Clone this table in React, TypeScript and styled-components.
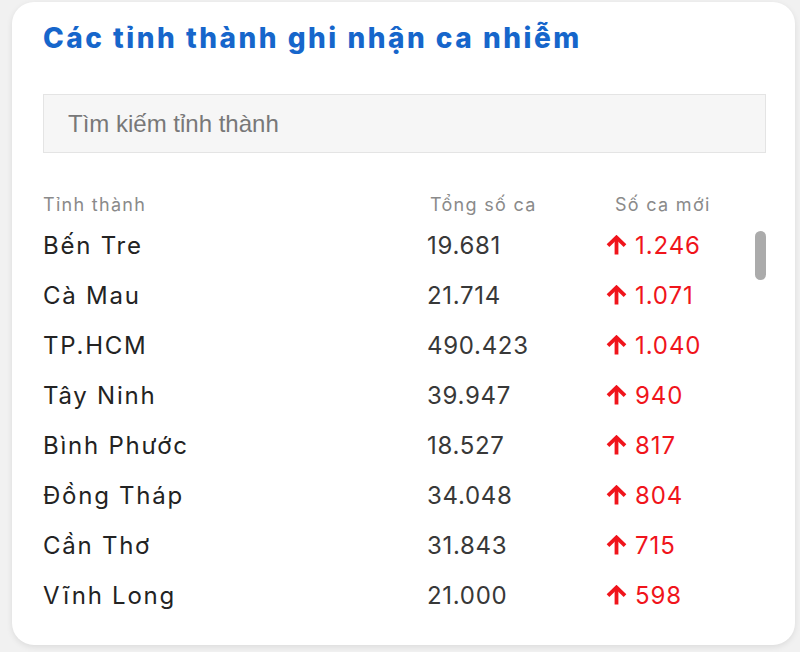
import React from 'react';
import styled, { createGlobalStyle } from 'styled-components';

interface Province {
  name: string;
  total: string;
  today: string;
}

const provinces: Province[] = [
  { name: 'Bến Tre', total: '19.681', today: '1.246' },
  { name: 'Cà Mau', total: '21.714', today: '1.071' },
  { name: 'TP.HCM', total: '490.423', today: '1.040' },
  { name: 'Tây Ninh', total: '39.947', today: '940' },
  { name: 'Bình Phước', total: '18.527', today: '817' },
  { name: 'Đồng Tháp', total: '34.048', today: '804' },
  { name: 'Cần Thơ', total: '31.843', today: '715' },
  { name: 'Vĩnh Long', total: '21.000', today: '598' },
];

const ArrowUp = () => (
  <svg width="21" height="20" viewBox="0 0 21 20" fill="none">
    <path d="M10.5 19.5V3" stroke="#f0141b" strokeWidth="3.8" />
    <path d="M2 10.6L10.5 2.4 19 10.6" stroke="#f0141b" strokeWidth="3.8" />
  </svg>
);

const App = () => (
  <>
    <GlobalStyle />
    <Page>
      <Card>
        <Title>Các tỉnh thành ghi nhận ca nhiễm</Title>
        <Search placeholder="Tìm kiếm tỉnh thành" />
        <HeadRow>
          <HeadCell>Tỉnh thành</HeadCell>
          <HeadCell shift={3}>Tổng số ca</HeadCell>
          <HeadCell shift={9}>Số ca mới</HeadCell>
        </HeadRow>
        <Body>
          <Rows>
            {provinces.map((p) => (
              <Row key={p.name}>
                <Name>{p.name}</Name>
                <Total>{p.total}</Total>
                <New>
                  <ArrowUp />
                  {p.today}
                </New>
              </Row>
            ))}
          </Rows>
          <Track>
            <Thumb />
          </Track>
        </Body>
      </Card>
    </Page>
  </>
);

export default App;

const GlobalStyle = createGlobalStyle`
  body {
    margin: 0;
    background: #f1f1f1;
    font-family: Inter, "Noto Sans", sans-serif;
  }
`;

const Page = styled.div`
  height: 652px;
  padding: 2px 5px 0 12px;
  box-sizing: border-box;
`;

const Card = styled.div`
  width: 783px;
  height: 643px;
  box-sizing: border-box;
  background: #fff;
  border-radius: 22px;
  box-shadow: 0 2px 6px rgba(0, 0, 0, 0.09);
  padding: 16px 29px 0 31px;
  display: flex;
  flex-direction: column;
`;

const Title = styled.h1`
  margin: 0;
  font-size: 28px;
  line-height: 40px;
  font-weight: 800;
  color: #1666cb;
  letter-spacing: 2.5px;
  white-space: nowrap;
`;

const Search = styled.input`
  margin-top: 36px;
  height: 59px;
  box-sizing: border-box;
  border: 1px solid #e4e4e4;
  background: #f6f6f6;
  padding: 0 24px;
  font-family: "Liberation Sans", Arial, sans-serif;
  font-size: 24px;
  outline: none;
  &::placeholder {
    color: #787878;
  }
`;

const Columns = styled.div`
  display: grid;
  grid-template-columns: 384px 179px 1fr;
  align-items: center;
`;

const HeadRow = styled(Columns)`
  height: 32px;
  margin-top: 35px;
`;

const HeadCell = styled.div<{ shift?: number }>`
  padding-left: ${({ shift }) => shift || 0}px;
  font-size: 18px;
  color: #8a8a8a;
  letter-spacing: 1.3px;
`;

const Body = styled.div`
  display: flex;
  height: 400px;
`;

const Rows = styled.div`
  flex: 1;
`;

const Track = styled.div`
  width: 11px;
  padding-top: 11px;
`;

const Thumb = styled.div`
  height: 49px;
  border-radius: 6px;
  background: #ababab;
`;

const Row = styled(Columns)`
  height: 50px;
  font-size: 24px;
`;

const Name = styled.div`
  color: #232323;
  letter-spacing: 1.75px;
`;

const Total = styled.div`
  color: #383838;
  letter-spacing: 0.7px;
`;

const New = styled.div`
  display: flex;
  align-items: center;
  gap: 8px;
  color: #f0141b;
  letter-spacing: 0.9px;
`;
